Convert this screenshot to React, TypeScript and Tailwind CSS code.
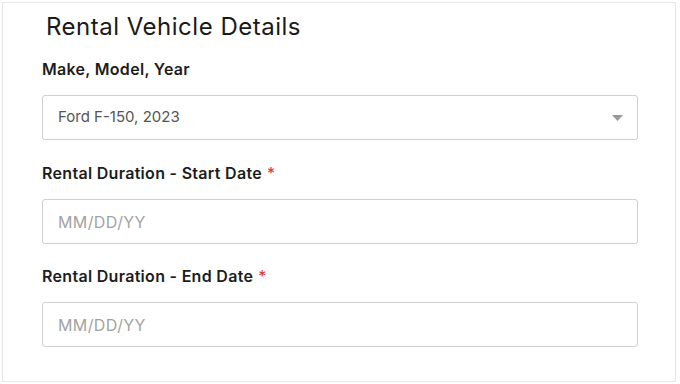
import React from "react";

function Label({ text, required }: { text: string; required?: boolean }) {
  return (
    <div className="text-[16px] font-semibold text-[#1d1d1d] leading-5 tracking-[0.3px]">
      {text}
      {required && <span className="text-[#e0302b] font-normal ml-[5px]">*</span>}
    </div>
  );
}

export default function App() {
  return (
    <div className="w-[680px] h-[384px] bg-white p-[2px]" style={{ fontFamily: "Inter, 'Noto Sans', sans-serif" }}>
      <div className="h-[380px] w-[674px] border border-[#e6e6e6] pl-[39px] pr-[37px] pt-[9px]">
        <h2 className="text-[24px] leading-[30px] text-[#1a1a1a] font-normal pl-[4px] tracking-[0.5px]">Rental Vehicle Details</h2>
        <div className="mt-[17px]">
          <Label text="Make, Model, Year" />
        </div>
        <div className="mt-[16px] h-[45px] border border-[#cfcfcf] rounded-[3px] flex items-center justify-between pl-[15px] pr-[14px]">
          <span className="text-[15px] text-[#555555]">Ford F-150, 2023</span>
          <svg width="11" height="6" viewBox="0 0 11 6">
            <path d="M0 0 H11 L5.5 6 Z" fill="#9a9a9a" />
          </svg>
        </div>
        <div className="mt-[23px]">
          <Label text="Rental Duration - Start Date" required />
        </div>
        <div className="mt-[16px] h-[45px] border border-[#cfcfcf] rounded-[3px] flex items-center pl-[15px]">
          <span className="text-[16px] text-[#a3a3a3] tracking-[0.4px]">MM/DD/YY</span>
        </div>
        <div className="mt-[22px]">
          <Label text="Rental Duration - End Date" required />
        </div>
        <div className="mt-[16px] h-[45px] border border-[#cfcfcf] rounded-[3px] flex items-center pl-[15px]">
          <span className="text-[16px] text-[#a3a3a3] tracking-[0.4px]">MM/DD/YY</span>
        </div>
      </div>
    </div>
  );
}
